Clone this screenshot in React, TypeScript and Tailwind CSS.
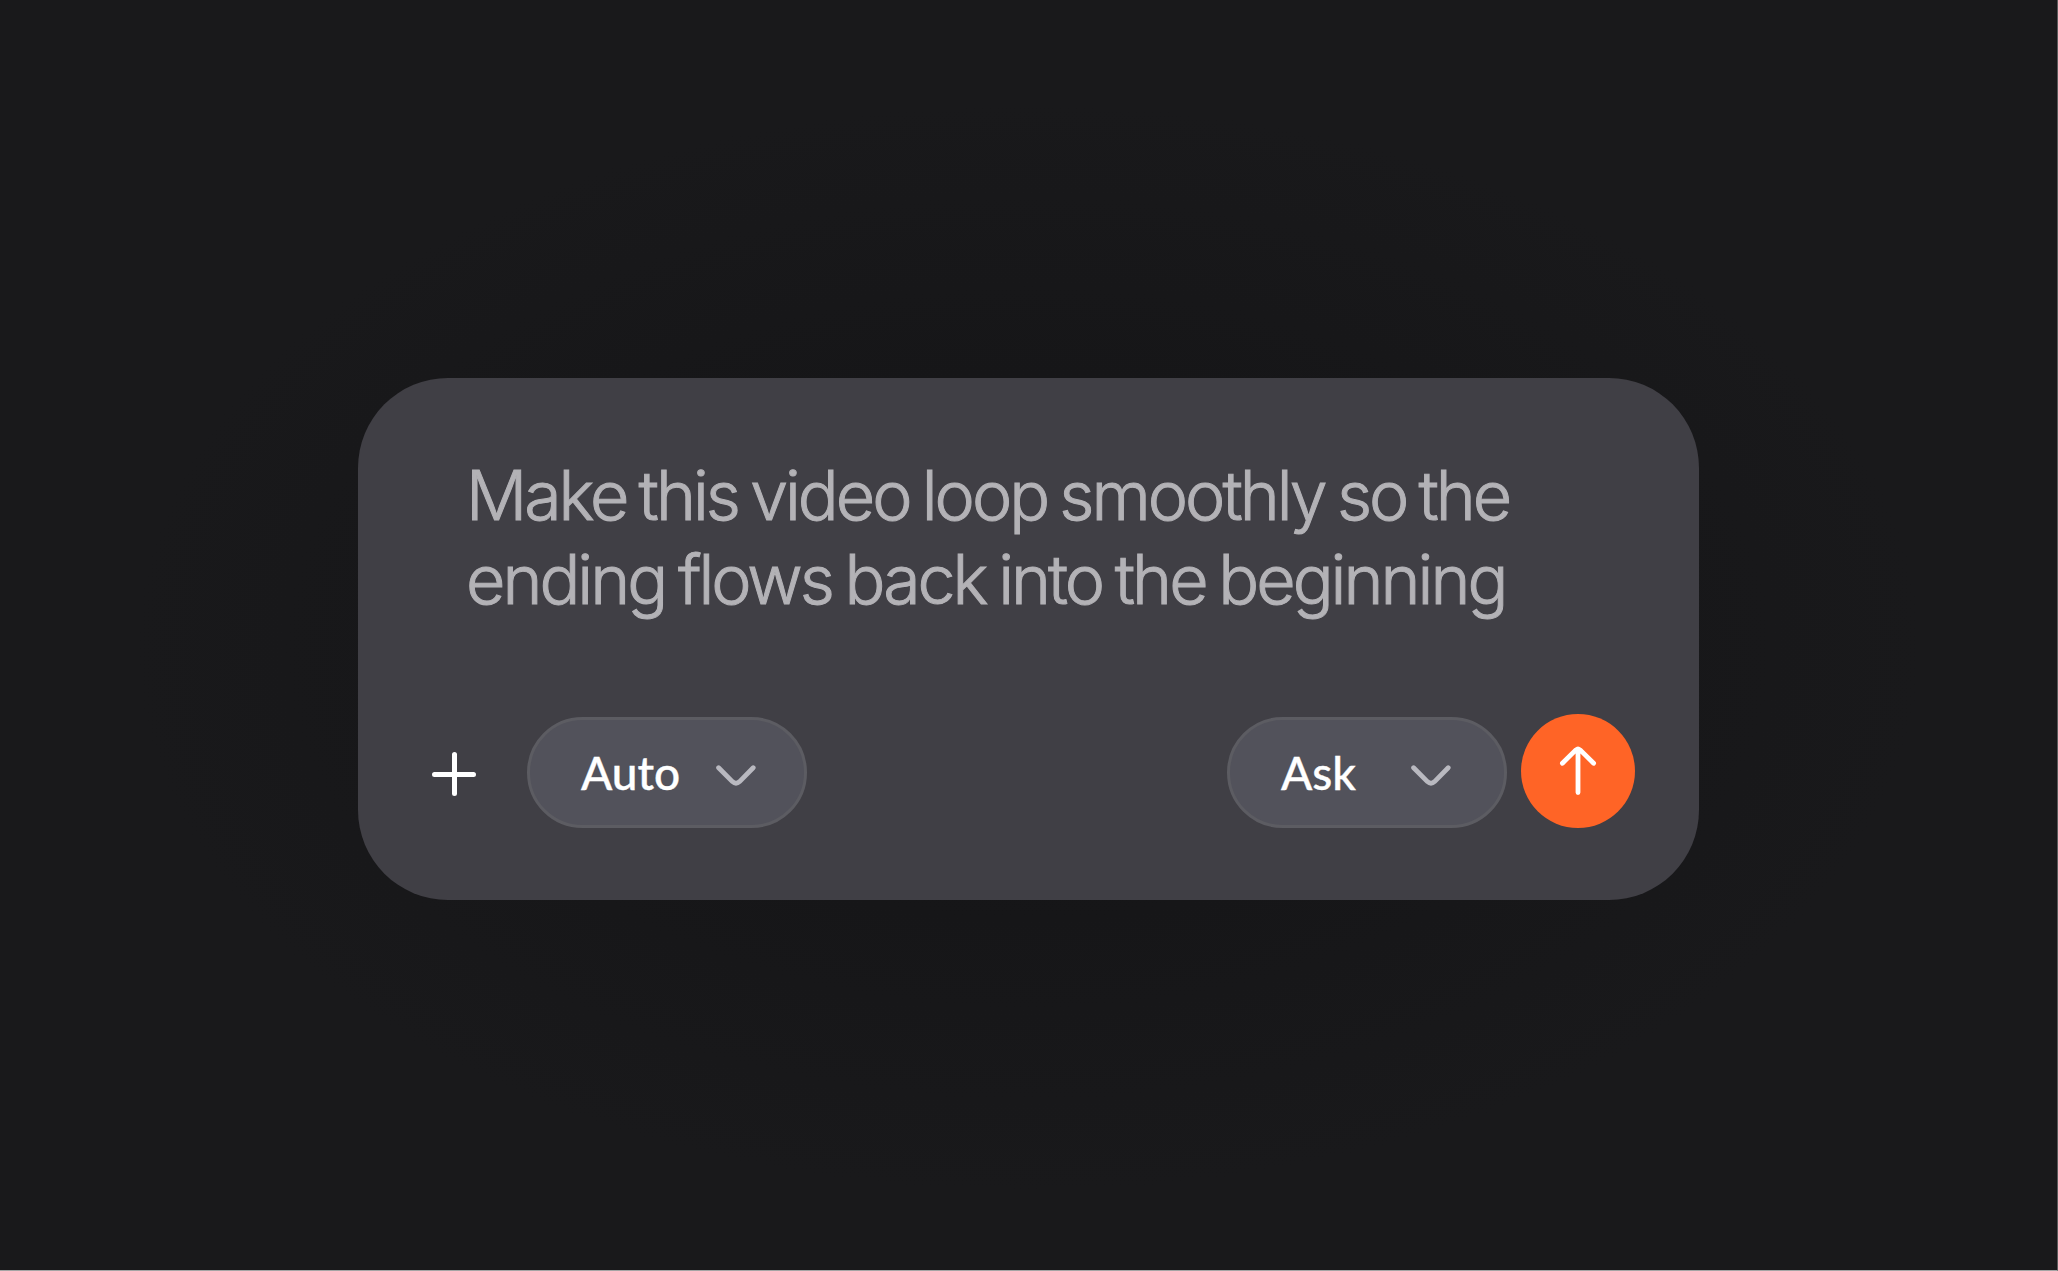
import type { ReactNode } from 'react';
import clsx from 'clsx';

function PlusIcon() {
  return (
    <svg width="44" height="44" viewBox="0 0 44 44" fill="none" stroke="currentColor" strokeWidth="5" strokeLinecap="round">
      <path d="M22.5 2.5v39M2.5 22.5h39" />
    </svg>
  );
}

function ChevronIcon() {
  return (
    <svg width="40" height="22" viewBox="0 0 40 22" fill="none" stroke="currentColor" strokeWidth="4.8" strokeLinecap="round">
      <path d="M2.6 2.8 16.4 16.6q3.6 3.4 7.2 0L37.2 2.8" />
    </svg>
  );
}

function ArrowUpIcon() {
  return (
    <svg width="38" height="50" viewBox="0 0 38 50" fill="none" stroke="currentColor" strokeWidth="4.8" strokeLinecap="round" strokeLinejoin="round">
      <path d="M19 3v43.5M3.4 17.2 16.4 4.4q2.6-2.2 5.2 0L34.6 17.2" />
    </svg>
  );
}

function SelectPill({ children, className }: { children: ReactNode; className?: string }) {
  return (
    <button
      type="button"
      className={clsx(
        'flex h-[111px] w-[280px] items-center justify-between rounded-full border-[3px] border-[#5c5c62] bg-[#52525b] pl-[51px] font-[Lato,sans-serif] text-[46px] leading-[56px] font-medium text-white [-webkit-text-stroke:0.4px_white]',
        className,
      )}
    >
      <span>{children}</span>
      <span className="pt-1.5 text-[#b9b9c0]">
        <ChevronIcon />
      </span>
    </button>
  );
}

export default function App() {
  return (
    <div className="flex h-[1271px] w-[2058px] flex-col items-center overflow-hidden border-r border-b border-r-[#5a5a5b] border-b-[#a5a5a5] bg-[#19191b] bg-[radial-gradient(892px_543px_at_50%_51%,#131315,#19191b)] pt-[378px]">
      <div className="flex h-[522px] w-[1341px] flex-col rounded-[90px] bg-[#403f45] pt-[75px] pr-[64px] pb-[72px] pl-[74px]">
        <div className="flex-1 pl-[34px] font-[Inter,sans-serif] text-[68px] leading-[84px] font-light whitespace-nowrap text-[#b3b2b6] [-webkit-text-stroke:1px_#b3b2b6]">
          <p className="tracking-[-3px] [word-spacing:-3.9px]">Make this video loop smoothly so the</p>
          <p className="tracking-[-3px] [word-spacing:-3.4px]">ending flows back into the beginning</p>
        </div>
        <div className="flex items-end">
          <button type="button" className="mb-8 text-white" aria-label="Add attachment">
            <PlusIcon />
          </button>
          <div className="ml-[51px]">
            <SelectPill className="pr-[48px]">Auto</SelectPill>
          </div>
          <div className="ml-auto flex items-end gap-[14px]">
            <SelectPill className="pr-[53px]">Ask</SelectPill>
            <button
              type="button"
              className="flex size-[114px] items-center justify-center rounded-full bg-[#ff6426] text-white"
              aria-label="Send"
            >
              <ArrowUpIcon />
            </button>
          </div>
        </div>
      </div>
    </div>
  );
}
